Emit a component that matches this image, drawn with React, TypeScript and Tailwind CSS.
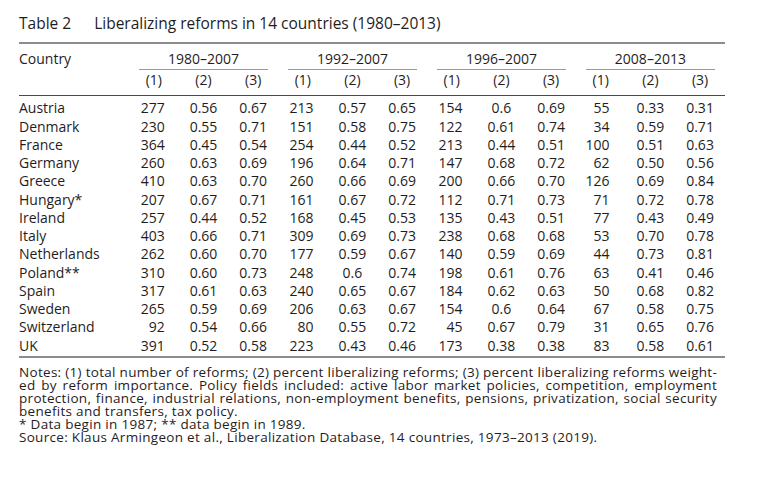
const rows: [string, (string | number)[]][] = [
  ['Austria', [277, '0.56', '0.67', 213, '0.57', '0.65', 154, '0.6', '0.69', 55, '0.33', '0.31']],
  ['Denmark', [230, '0.55', '0.71', 151, '0.58', '0.75', 122, '0.61', '0.74', 34, '0.59', '0.71']],
  ['France', [364, '0.45', '0.54', 254, '0.44', '0.52', 213, '0.44', '0.51', 100, '0.51', '0.63']],
  ['Germany', [260, '0.63', '0.69', 196, '0.64', '0.71', 147, '0.68', '0.72', 62, '0.50', '0.56']],
  ['Greece', [410, '0.63', '0.70', 260, '0.66', '0.69', 200, '0.66', '0.70', 126, '0.69', '0.84']],
  ['Hungary*', [207, '0.67', '0.71', 161, '0.67', '0.72', 112, '0.71', '0.73', 71, '0.72', '0.78']],
  ['Ireland', [257, '0.44', '0.52', 168, '0.45', '0.53', 135, '0.43', '0.51', 77, '0.43', '0.49']],
  ['Italy', [403, '0.66', '0.71', 309, '0.69', '0.73', 238, '0.68', '0.68', 53, '0.70', '0.78']],
  ['Netherlands', [262, '0.60', '0.70', 177, '0.59', '0.67', 140, '0.59', '0.69', 44, '0.73', '0.81']],
  ['Poland**', [310, '0.60', '0.73', 248, '0.6', '0.74', 198, '0.61', '0.76', 63, '0.41', '0.46']],
  ['Spain', [317, '0.61', '0.63', 240, '0.65', '0.67', 184, '0.62', '0.63', 50, '0.68', '0.82']],
  ['Sweden', [265, '0.59', '0.69', 206, '0.63', '0.67', 154, '0.6', '0.64', 67, '0.58', '0.75']],
  ['Switzerland', [92, '0.54', '0.66', 80, '0.55', '0.72', 45, '0.67', '0.79', 31, '0.65', '0.76']],
  ['UK', [391, '0.52', '0.58', 223, '0.43', '0.46', 173, '0.38', '0.38', 83, '0.58', '0.61']],
];

const periods = ['1980–2007', '1992–2007', '1996–2007', '2008–2013'];

const grid = 'grid grid-cols-[110px_repeat(12,49.67px)]';

// first column of each period is right aligned, the others centred
function cellClass(i: number) {
  if (i % 3 !== 0) return 'text-center';
  return i === 9 ? 'text-right pr-[16px]' : 'text-right pr-[14px]';
}

export default function App() {
  return (
    <div
      className="min-h-[489px] w-[757px] bg-white pl-[19px] pt-[13px] text-[#1f1d1e]"
      style={{ fontFamily: '"Open Sans", "Noto Sans", sans-serif' }}
    >
      <div className="flex text-[15.5px] leading-[20px]">
        <span>Table 2</span>
        <span className="ml-[23px]">Liberalizing reforms in 14 countries (1980–2013)</span>
      </div>

      <div className="mt-[9px] h-[2px] w-[706px] bg-[#8c8c8c]" />

      <div className="text-[14px] leading-[18.23px]">
        <div className={`${grid} pt-[5.7px]`}>
          <div>Country</div>
          {periods.map((p) => (
            <div key={p} className="col-span-3">
              <div className="text-center">{p}</div>
              <div className="mx-[10px] mt-[1px] h-[1.5px] bg-[#9a9a9a]" />
            </div>
          ))}
        </div>

        <div className={`${grid} pt-[1px]`}>
          <div />
          {Array.from({ length: 12 }, (_, i) => (
            <div key={i} className="text-center">
              ({(i % 3) + 1})
            </div>
          ))}
        </div>

        <div className="mt-[5.3px] h-[1px] w-[706px] bg-[#4a4a4a]" />

        <div className="pt-[3.5px]">
          {rows.map(([name, vals]) => (
            <div key={name} className={grid}>
              <div>{name}</div>
              {vals.map((v, i) => (
                <div key={i} className={cellClass(i)}>
                  {v}
                </div>
              ))}
            </div>
          ))}
        </div>
      </div>

      <div className="mt-[1.6px] h-[2px] w-[706px] bg-[#8c8c8c]" />

      <div className="mt-[7.3px] w-[698px] text-[13.5px] leading-[13px] tracking-[0.3px]">
        <div className="whitespace-nowrap text-justify [text-align-last:justify]">
          Notes: (1) total number of reforms; (2) percent liberalizing reforms; (3) percent liberalizing reforms weight-
        </div>
        <div className="whitespace-nowrap text-justify [text-align-last:justify]">
          ed by reform importance. Policy fields included: active labor market policies, competition, employment
        </div>
        <div className="whitespace-nowrap text-justify [text-align-last:justify]">
          protection, finance, industrial relations, non-employment benefits, pensions, privatization, social security
        </div>
        <div>benefits and transfers, tax policy.</div>
        <div>* Data begin in 1987; ** data begin in 1989.</div>
        <div>Source: Klaus Armingeon et al., Liberalization Database, 14 countries, 1973–2013 (2019).</div>
      </div>
    </div>
  );
}
